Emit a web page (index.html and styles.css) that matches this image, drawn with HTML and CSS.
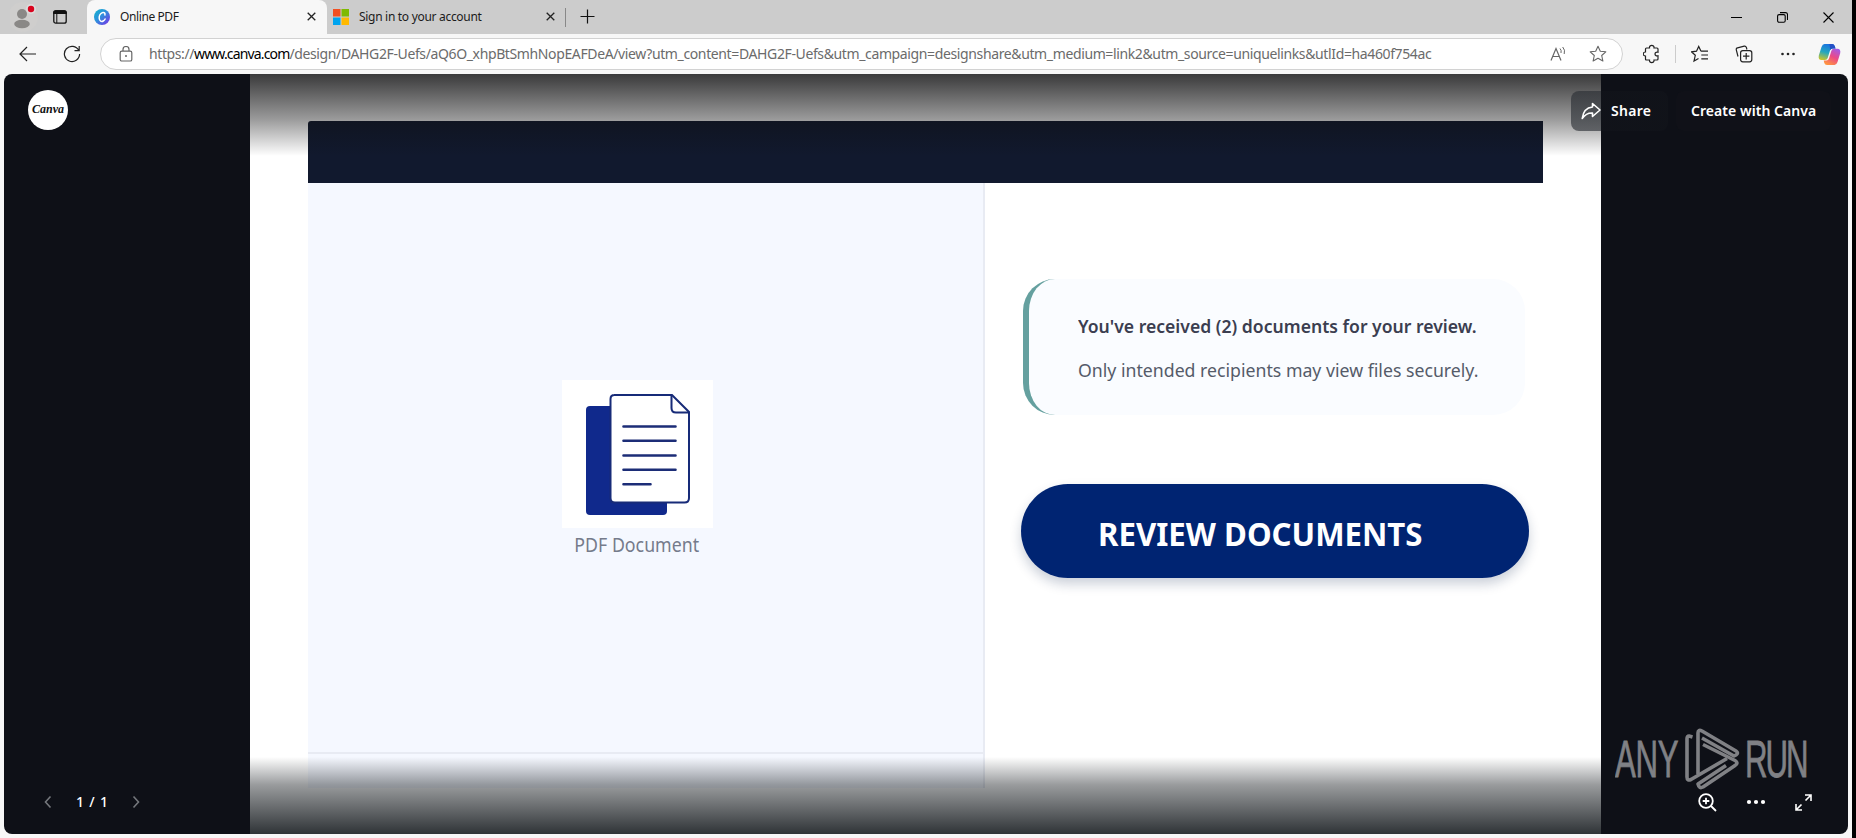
FILE: index.html
```html
<!DOCTYPE html>
<html lang="en">
<head>
<meta charset="utf-8">
<title>Online PDF</title>
<link rel="stylesheet" href="styles.css">
</head>
<body>
<div class="window">
  <header class="tabbar">
    <div class="profile">
      <svg width="32" height="34" viewBox="0 0 32 34"><circle cx="13" cy="17" r="15" fill="#cfcecd"/><circle cx="12" cy="14" r="5" fill="#8a8886"/><ellipse cx="12" cy="24" rx="7.8" ry="4.2" fill="#8a8886"/><circle cx="21" cy="9" r="5" fill="#dcdbdb"/><circle cx="21" cy="9" r="3.2" fill="#d9041e"/></svg>
    </div>
    <svg class="workspaces" width="16" height="16" viewBox="0 0 16 16"><rect x="1.8" y="1.8" width="12.4" height="12.4" rx="2" fill="none" stroke="#111" stroke-width="1.3"/><path d="M1.8 4.500V3.500q0-1.700 1.700-1.700h9q1.700 0 1.700 1.700v1z" fill="#111" stroke="#111" stroke-width="1.200"/><path d="M4.800 4v10" stroke="#111"/></svg>
    <div class="tab tab-active">
      <svg width="16" height="16" viewBox="0 0 16 16"><defs><linearGradient id="cv" x1="0" y1="0" x2="1" y2="1"><stop offset="0" stop-color="#10b6cc"/><stop offset=".45" stop-color="#2f8fdc"/><stop offset="1" stop-color="#7d2ae8"/></linearGradient></defs><circle cx="8" cy="8" r="8" fill="url(#cv)"/><path d="M10.900 6c.5-1.900-.8-2.900-2.200-2.500C6.400 4.100 5 6.800 5.200 9.300c.2 2.900 2.300 3.700 4 2.700.9-.5 1.600-1.300 1.900-2" fill="none" stroke="#fff" stroke-width="1.500" stroke-linecap="round"/></svg>
      <span class="tab-title t1">Online PDF</span>
      <svg class="close" width="9" height="9" viewBox="0 0 9 9"><path d="M.7.7l7.600 7.600M8.300.7L.7 8.300" stroke="#222" stroke-width="1.300"/></svg>
    </div>
    <div class="tab">
      <svg width="16" height="16" viewBox="0 0 16 16"><path d="M0 0h7.500v7.500H0z" fill="#f25022"/><path d="M8.500 0H16v7.500H8.500z" fill="#7fba00"/><path d="M0 8.500h7.500V16H0z" fill="#00a4ef"/><path d="M8.500 8.500H16V16H8.500z" fill="#ffb900"/></svg>
      <span class="tab-title t2">Sign in to your account</span>
      <svg class="close" width="9" height="9" viewBox="0 0 9 9"><path d="M.7.7l7.600 7.600M8.300.7L.7 8.300" stroke="#222" stroke-width="1.300"/></svg>
    </div>
    <span class="tab-divider"></span>
    <svg class="newtab" width="15" height="15" viewBox="0 0 15 15"><path d="M7.500 .5v14M.5 7.500h14" stroke="#111" stroke-width="1.200"/></svg>
    <div class="caption">
      <svg width="11" height="11" viewBox="0 0 11 11"><path d="M0 5.500h11" stroke="#000"/></svg>
      <svg width="11" height="11" viewBox="0 0 11 11"><rect x=".6" y="2.600" width="7.600" height="7.600" rx="1.500" fill="none" stroke="#000" stroke-width="1.100"/><path d="M3 .6h5.500q2 0 2 2V8" fill="none" stroke="#000" stroke-width="1.100"/></svg>
      <svg width="11" height="11" viewBox="0 0 11 11"><path d="M.5.500l10 10M10.500.5l-10 10" stroke="#000" stroke-width="1.100"/></svg>
    </div>
  </header>

  <div class="toolbar">
    <svg class="back" width="18" height="16" viewBox="0 0 18 16"><path d="M17 8H1.500M8 1L1 8l7 7" fill="none" stroke="#222" stroke-width="1.200"/></svg>
    <svg class="reload" width="18" height="18" viewBox="0 0 18 18"><path d="M15.800 5.500A7.600 7.600 0 1 0 16.600 9M16.200 1v4.700h-4.700" fill="none" stroke="#222" stroke-width="1.200"/></svg>
    <div class="address">
      <svg class="lock" width="14" height="16" viewBox="0 0 14 16"><rect x="1.200" y="5.200" width="11.600" height="9.800" rx="1.600" fill="none" stroke="#666" stroke-width="1.200"/><path d="M4 5V3.500a3 3 0 0 1 6 0V5" fill="none" stroke="#666" stroke-width="1.200"/><circle cx="7" cy="10" r="1" fill="#666"/></svg>
      <span class="url"><span class="u1">https://</span><b>www.canva.com</b><span class="u3">/design/DAHG2F-Uefs/aQ6O_xhpBtSmhNopEAFDeA/view?utm_content=DAHG2F-Uefs&amp;utm_campaign=designshare&amp;utm_medium=link2&amp;utm_source=uniquelinks&amp;utlId=ha460f754ac</span></span>
      <svg class="aloud" width="17" height="16" viewBox="0 0 17 16"><path d="M1 14.500L6 2.500l5 12M2.800 10.500h6.400" fill="none" stroke="#666" stroke-width="1.200"/><path d="M10 2.500q1.700 1.800 1 4.500M12.700 1q2.800 3 1.500 7" fill="none" stroke="#666"/></svg>
      <svg class="fav" width="18" height="18" viewBox="0 0 18 18"><path d="M9 1.200l2.300 5 5.500.6-4.100 3.700 1.200 5.500L9 13.200 4.100 16l1.200-5.500L1.200 6.800l5.500-.6z" fill="none" stroke="#666" stroke-width="1.100" stroke-linejoin="round"/></svg>
    </div>
    <div class="tools">
      <svg class="i-ext" width="18" height="20" viewBox="0 0 18 20"><path d="M3.500 4h3c-.5-3.500 5-3.500 4.500 0h3q1 0 1 1v3.200c-4-1-4 4.600 0 3.600V15q0 1-1 1h-3c.5 3.500-5 3.500-4.500 0h-3q-1 0-1-1v-3c-3 0-3-4 0-4V5q0-1 1-1z" fill="none" stroke="#222" stroke-width="1.200"/></svg>
      <span class="tool-divider"></span>
      <svg class="i-favs" width="18" height="18" viewBox="0 0 18 18"><path d="M10 6.200L7.700 1.500 5.500 6.200l-5 .6 3.800 3.500-1.300 5.800 4.500-2.500M10 6.200h7M10.300 10H17M10.300 13.800H17" fill="none" stroke="#222" stroke-width="1.200"/></svg>
      <svg class="i-coll" width="18" height="18" viewBox="0 0 18 18"><path d="M3 11.500L1.300 4.800q-.4-1.500 1.200-1.900l6.700-1.700q1.500-.4 2.200 1.200l.5 2.100" fill="none" stroke="#222" stroke-width="1.200"/><rect x="5.600" y="5.600" width="11.200" height="11.200" rx="2.200" fill="none" stroke="#222" stroke-width="1.200"/><path d="M11.200 8v6.400M8 11.200h6.400" stroke="#222" stroke-width="1.200"/></svg>
      <svg class="i-more" width="16" height="4" viewBox="0 0 16 4"><g fill="#222"><circle cx="2.500" cy="2" r="1.300"/><circle cx="8" cy="2" r="1.300"/><circle cx="13.500" cy="2" r="1.300"/></g></svg>
      <svg class="i-copilot" width="23" height="21" viewBox="0 0 23 21"><defs><linearGradient id="ca" x1=".5" y1="0" x2=".2" y2="1"><stop offset="0" stop-color="#1a72e0"/><stop offset=".5" stop-color="#22a7c0"/><stop offset="1" stop-color="#cfc527"/></linearGradient><linearGradient id="cb" x1=".8" y1="0" x2=".3" y2="1"><stop offset="0" stop-color="#a45be8"/><stop offset=".5" stop-color="#ec4a86"/><stop offset="1" stop-color="#ff9540"/></linearGradient></defs><path d="M6.500 0H14q2 0 2.700 2l.8 2.600h-2.800q-2 0-2.700 2L9.700 14q-.7 2-2.700 2H3.500Q0 16 .8 11.500L3.500 3Q4.500 0 6.500 0z" fill="url(#ca)"/><path d="M16.500 21H9q-2 0-2.700-2l-.6-2.500h2.800q1.800 0 2.500-2L13.300 7q.7-2.200 2.700-2.200h3.500q3.500 0 2.700 4.500L19.500 18q-1 3-3 3z" fill="url(#cb)"/><path d="M14 0q2 0 2.700 2l.8 2.600h-2.800q-1.700 0-2.500 1.500L11.500 0z" fill="#2450c5"/></svg>
    </div>
  </div>

  <main class="viewer">
    <section class="slide">
      <div class="banner"></div>
      <div class="content">
        <div class="preview">
          <div class="preview-body">
            <div class="doc-card">
              <svg width="105" height="122" viewBox="0 0 105 122"><rect x="1" y="12" width="81" height="109" rx="4" fill="#10298c"/><path d="M29 1h58l17 17v86q0 4.500-4.500 4.500H30q-4.500 0-4.500-4.500V5q0-4 4-4z" fill="#fff" stroke="#172b78" stroke-width="2"/><path d="M86.500 1v13q0 4.500 4.500 4.500h13" fill="none" stroke="#172b78" stroke-width="2"/><g stroke="#1c2d77" stroke-width="2.600" stroke-linecap="round"><path d="M38.500 32.500h52M38.500 46.800h52M38.500 61.500h52M38.500 75.800h52M38.500 90.300h27"/></g></svg>
            </div>
            <p class="doc-label">PDF Document</p>
          </div>
          <div class="preview-foot"></div>
        </div>
        <div class="side">
          <div class="notice">
            <p class="n1">You've received (2) documents for your review.</p>
            <p class="n2">Only intended recipients may view files securely.</p>
          </div>
          <div class="cta"><span>REVIEW DOCUMENTS</span></div>
        </div>
      </div>
    </section>
    <div class="shade shade-top"></div>
    <div class="shade shade-bottom"></div>
    <div class="overlay overlay-top">
      <div class="logo">Canva</div>
      <div class="actions">
        <div class="action share"><svg width="20" height="18" viewBox="0 0 20 18"><path d="M11.500 5V1.500L19 8l-7.500 6.500V11C7 10.700 4 12.500 1.200 16.500 2 10 5.500 5.600 11.500 5z" fill="none" stroke="#fff" stroke-width="1.600" stroke-linejoin="round"/></svg><span>Share</span></div>
        <div class="action create"><span>Create with Canva</span></div>
      </div>
    </div>
    <div class="overlay overlay-bottom">
      <div class="pager">
        <svg width="8" height="14" viewBox="0 0 8 14"><path d="M6.500 1.500L1.500 7l5 5.500" fill="none" stroke="#74777c" stroke-width="1.600"/></svg>
        <span>1 / 1</span>
        <svg width="8" height="14" viewBox="0 0 8 14"><path d="M1.500 1.500l5 5.500-5 5.500" fill="none" stroke="#74777c" stroke-width="1.600"/></svg>
      </div>
      <div class="controls">
        <svg width="19" height="19" viewBox="0 0 19 19"><circle cx="8" cy="8" r="6.800" fill="none" stroke="#fff" stroke-width="1.800"/><path d="M13 13l5 5M8 4.700v6.600M4.700 8h6.600" stroke="#fff" stroke-width="1.800" fill="none"/></svg>
        <svg width="20" height="6" viewBox="0 0 20 6"><g fill="#fff"><circle cx="3" cy="3" r="2.100"/><circle cx="10" cy="3" r="2.100"/><circle cx="17" cy="3" r="2.100"/></g></svg>
        <svg width="17" height="17" viewBox="0 0 17 17"><path d="M10 1h6v6M16 1l-5.500 5.500M7 16H1v-6M1 16l5.500-5.500" fill="none" stroke="#fff" stroke-width="1.600"/></svg>
      </div>
    </div>
    <svg class="watermark" width="194" height="64" viewBox="0 0 194 64">
      <g fill="#808185" stroke="#808185" stroke-width=".8" font-family="'Liberation Sans', sans-serif" font-size="52">
        <text transform="translate(0 49.500) scale(.6 1)" textLength="106">ANY</text>
        <text transform="translate(130 49.500) scale(.6 1)" textLength="106">RUN</text>
      </g>
      <g fill="none" stroke="#808185" stroke-width="3.600" stroke-linejoin="round">
        <path d="M77.500 10l-3.500-1q-2 0-2 3V50q0 4 4 2.500L112 31.500"/>
        <path d="M83 47V6q0-4 4-2l34 20q3 2 0 4l-2 1L87 11"/>
        <path d="M88 17.500l32 16q4 2.500 0 5L88 60q-4 2-5-3l28-18.500"/>
      </g>
    </svg>
  </main>
</div>
</body>
</html>
```
FILE: styles.css
```css
* { box-sizing: border-box; }
body {
  margin: 0;
  width: 1856px;
  height: 838px;
  overflow: hidden;
  background: #000;
  font-family: "Noto Sans", "Open Sans", sans-serif;
}
p { margin: 0; }
svg { display: block; flex: none; }
.window {
  width: 1852px;
  height: 838px;
  background: #f7f7f7;
  display: flex;
  flex-direction: column;
}
.tabbar {
  height: 34px;
  background: #ccc;
  display: flex;
  align-items: center;
  flex: none;
}
.profile { width: 52px; padding-left: 10px; height: 34px; }
.workspaces { margin-right: 19px; }
.tab {
  width: 239px;
  height: 34px;
  display: flex;
  align-items: center;
  padding: 0 11px 1px 6px;
  font-size: 12px;
  color: #1b1b1b;
}
.tab-active {
  width: 240px;
  padding-left: 7px;
  background: #f7f7f7;
  border-radius: 8px 8px 0 0;
}
.tab-title { margin-left: 10px; flex: 1; white-space: nowrap; }
.t1 { letter-spacing: -.4px; }
.t2 { letter-spacing: -.3px; }
.tab-divider { width: 1px; height: 19px; background: #888; margin-left: -1px; }
.newtab { margin-left: 14px; margin-bottom: 1px; }
.caption { margin-left: auto; display: flex; gap: 35px; padding-right: 18px; }

.toolbar {
  height: 40px;
  display: flex;
  align-items: center;
  flex: none;
}
.back { margin-left: 19px; }
.reload { margin-left: 26px; margin-right: 19px; }
.address {
  width: 1523px;
  height: 32px;
  background: #fff;
  border: 1px solid #d2d2d2;
  border-radius: 16px;
  display: flex;
  align-items: center;
  padding: 0 15px 0 18px;
}
.url {
  margin-left: 16px;
  margin-bottom: 1px;
  font-size: 14px;
  color: #6b6b6b;
  white-space: nowrap;
}
.url b { font-weight: 400; color: #000; letter-spacing: -.85px; }
.u1 { letter-spacing: -.4px; }
.u3 { letter-spacing: -.375px; }
.aloud { margin-left: auto; margin-right: 22px; }
.tools { display: flex; align-items: center; }
.i-ext { margin-left: 20px; }
.tool-divider { width: 1px; height: 18px; background: #ccc; margin: 0 15px 0 14px; }
.i-coll { margin-left: 26px; }
.i-more { margin-left: 27px; }
.i-copilot { margin-left: 22px; }

.viewer {
  position: relative;
  width: 1844px;
  height: 760px;
  margin-left: 4px;
  border-radius: 8px;
  background: #0e1017;
  overflow: hidden;
  display: flex;
  justify-content: flex-start;
}
.slide {
  width: 1351px;
  height: 760px;
  margin-left: 246px;
  background: #fff;
  padding: 47px 58px 0;
  display: flex;
  flex-direction: column;
}
.banner {
  height: 62px;
  background: #11192e;
  border-radius: 3px 0 0 0;
  flex: none;
}
.content { display: flex; align-items: flex-start; }
.preview {
  width: 677px;
  border-right: 2px solid #e8ebf3;
  background: #f5f8ff;
}
.preview-body {
  height: 571px;
  border-bottom: 2px solid #e8ebf3;
  padding-top: 197px;
  display: flex;
  flex-direction: column;
  align-items: center;
}
.preview-foot { height: 34px; }
.doc-card {
  width: 151px;
  height: 148px;
  margin-right: 17px;
  background: #fff;
  display: flex;
  justify-content: center;
  padding-top: 14px;
}
.doc-label {
  margin-top: 4px;
  margin-right: 17px;
  font-size: 19px;
  line-height: 26px;
  color: #757b8b;
  white-space: nowrap;
  transform: scaleX(.935);
}
.side { padding: 96px 0 0 36px; }
.notice {
  width: 502px;
  height: 136px;
  margin-left: 2px;
  background: #fafcff;
  border-left: 6px solid #65a09f;
  border-radius: 32px;
  padding: 34px 0 0 49px;
  white-space: nowrap;
}
.n1, .n2 { font-size: 18px; line-height: 26px; transform-origin: 0 50%; }
.n1 { font-weight: 600; color: #3b3e50; transform: scaleX(.977); }
.n2 { color: #555b69; margin-top: 18px; transform: scaleX(.983); }
.cta {
  width: 508px;
  height: 94px;
  margin-top: 69px;
  border-radius: 47px;
  background: #002472;
  box-shadow: 0 6px 12px rgba(20, 40, 80, .22);
  color: #fff;
  font-size: 33px;
  font-weight: 700;
  line-height: 46px;
  padding: 27px 0 0 77px;
  white-space: nowrap;
}
.cta span { display: inline-block; transform: scaleX(.945); transform-origin: 0 50%; }

.shade { position: absolute; left: 246px; width: 1351px; }
.shade-top { top: 0; height: 82px; background: linear-gradient(rgba(14, 14, 15, .82), rgba(14, 14, 15, .42) 55%, rgba(14, 14, 15, 0)); }
.shade-bottom { bottom: 0; height: 77px; background: linear-gradient(rgba(13, 18, 22, 0), rgba(13, 18, 22, .42) 36%, rgba(13, 18, 22, .86)); }
.overlay {
  position: absolute;
  left: 0;
  right: 0;
  display: flex;
  justify-content: space-between;
  align-items: center;
  color: #fff;
}
.overlay-top { top: 16px; height: 41px; padding: 0 17px 1px 24px; }
.logo {
  width: 40px;
  height: 40px;
  border-radius: 50%;
  background: #fff;
  color: #111;
  font: italic 700 12px/38px "Liberation Serif", serif;
  text-align: center;
}
.actions { display: flex; gap: 8px; margin-top: 1px; }
.action {
  height: 40px;
  border-radius: 8px;
  background: rgba(24, 27, 32, .45);
  display: flex;
  align-items: center;
  font-size: 14px;
  font-weight: 600;
  white-space: nowrap;
}
.share {
  width: 97px;
  padding-left: 10px;
  gap: 10px;
  letter-spacing: .3px;
  background: linear-gradient(90deg, rgba(40, 44, 50, .62) 30px, rgba(24, 27, 32, .25) 30px);
}
.create { width: 155px; padding-left: 15px; background: rgba(24, 27, 32, .2); letter-spacing: .05px; }
.overlay-bottom { bottom: 20px; height: 24px; padding: 0 36px 0 40px; }
.pager { display: flex; align-items: center; font-size: 14px; font-weight: 500; margin-bottom: 1px; }
.pager span { width: 33px; margin: 0 23px 0 24px; white-space: nowrap; letter-spacing: .8px; }
.controls { display: flex; align-items: center; gap: 29px; }
.watermark { position: absolute; left: 1611px; top: 653px; }
```
